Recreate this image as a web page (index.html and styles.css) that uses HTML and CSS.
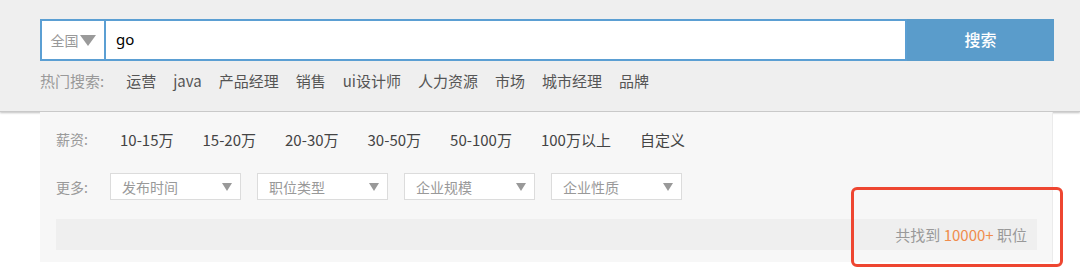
FILE: index.html
```html
<!DOCTYPE html>
<html lang="zh-CN">
<head>
    <meta charset="UTF-8">
    <meta name="viewport" content="width=device-width, initial-scale=1.0">
    <title>职位搜索</title>
    <link rel="stylesheet" href="styles.css">
</head>
<body>
<div class="search-bar">
    <form class="search-form">
        <div class="search-box">
            <div class="city">全国<span class="city-arrow"></span></div>
            <input type="text" class="keyword" value="go">
        </div>
        <button type="submit" class="search-btn">搜索</button>
    </form>
    <div class="hot-search">
        <span class="hot-label">热门搜索:</span>
        <a href="#">运营</a>
        <a href="#">java</a>
        <a href="#">产品经理</a>
        <a href="#">销售</a>
        <a href="#">ui设计师</a>
        <a href="#">人力资源</a>
        <a href="#">市场</a>
        <a href="#">城市经理</a>
        <a href="#">品牌</a>
    </div>
</div>

<div class="filter-panel">
    <div class="filter-row salary">
        <span class="filter-label">薪资:</span>
        <a href="#">10-15万</a>
        <a href="#">15-20万</a>
        <a href="#">20-30万</a>
        <a href="#">30-50万</a>
        <a href="#">50-100万</a>
        <a href="#">100万以上</a>
        <a href="#">自定义</a>
    </div>
    <div class="filter-row more">
        <span class="filter-label">更多:</span>
        <div class="select">发布时间<span class="arrow"></span></div>
        <div class="select">职位类型<span class="arrow"></span></div>
        <div class="select">企业规模<span class="arrow"></span></div>
        <div class="select">企业性质<span class="arrow"></span></div>
    </div>
    <div class="result-bar">
        共找到 <span class="count">10000+</span> 职位
    </div>
</div>

<!-- annotation box -->
<div class="highlight"></div>
</body>
</html>
```

FILE: styles.css
```css
/* General page styling */
body {
    margin: 0;
    padding: 0;
    background-color: #fff;
    font-family: "Noto Sans CJK SC", "Noto Sans", sans-serif;
    color: #333;
}

a {
    color: inherit;
    text-decoration: none;
}

/* Top search area */
.search-bar {
    height: 112px;
    box-sizing: border-box;
    padding: 19px 0 0 40px;
    background-color: #efefef;
    box-shadow: 0 1px 2px rgba(0, 0, 0, 0.25);
    border-bottom: 1px solid #c9c9c9;
}

.search-form {
    display: flex;
    width: 1014px;
    height: 42px;
}

.search-box {
    flex: 1;
    display: flex;
    border: 2px solid #5b9fd3;
    background-color: #fff;
}

.city {
    width: 62px;
    display: flex;
    align-items: center;
    justify-content: center;
    gap: 1px;
    border-right: 2px solid #5b9fd3;
    font-size: 14px;
    color: #999;
    background-color: #fff;
}

.city-arrow {
    width: 0;
    height: 0;
    border-left: 8px solid transparent;
    border-right: 8px solid transparent;
    border-top: 11px solid #9a9a9a;
}

.keyword {
    flex: 1;
    border: none;
    outline: none;
    padding: 0 0 3px 10px;
    font-family: "Noto Sans", sans-serif;
    font-size: 15px;
    color: #000;
}

.search-btn {
    width: 147px;
    border: none;
    background-color: #5a9ccb;
    color: #fff;
    font-family: inherit;
    font-size: 16px;
    font-weight: 500;
    cursor: pointer;
    padding: 0 0 2px;
}

.hot-search {
    display: flex;
    align-items: center;
    margin-top: 7px;
    height: 24px;
    font-size: 15px;
    color: #555;
}

.hot-search a {
    margin-right: 17px;
}

.hot-label {
    color: #999;
    margin-right: 22px;
}

/* Filter panel */
.filter-panel {
    width: 1013px;
    margin-left: 40px;
    padding: 13px 0 12px 16px;
    box-sizing: border-box;
    background-color: #f7f7f7;
    border-right: 1px solid #ebebeb;
}

.filter-row {
    display: flex;
    align-items: center;
    font-size: 14px;
}

.filter-label {
    color: #999;
    width: 54px;
    flex-shrink: 0;
}

.salary {
    height: 28px;
    color: #444;
}

.salary a {
    margin-right: 29px;
    font-size: 15px;
}

.salary a:first-of-type {
    margin-left: 10px;
}

.more {
    margin-top: 20px;
    gap: 16px;
}

.more .filter-label {
    width: 38px;
}

.select {
    width: 131px;
    height: 27px;
    box-sizing: border-box;
    display: flex;
    align-items: center;
    justify-content: space-between;
    padding: 0 6px 0 11px;
    border: 1px solid #dcdcdc;
    background-color: #fff;
    color: #999;
    font-size: 14px;
}

.arrow {
    width: 0;
    height: 0;
    border-left: 5px solid transparent;
    border-right: 5px solid transparent;
    border-top: 8px solid #999;
    margin-right: 2px;
}

.result-bar {
    margin-top: 19px;
    width: 981px;
    height: 31px;
    line-height: 31px;
    box-sizing: border-box;
    padding-right: 10px;
    text-align: right;
    background-color: #efefef;
    font-size: 15px;
    color: #999;
}

.count {
    color: #f08c4c;
}

/* red annotation drawn over the page */
.highlight {
    position: absolute;
    left: 851px;
    top: 187px;
    width: 212px;
    height: 80px;
    box-sizing: border-box;
    border: 3px solid #ee4631;
    border-radius: 6px;
}
```
